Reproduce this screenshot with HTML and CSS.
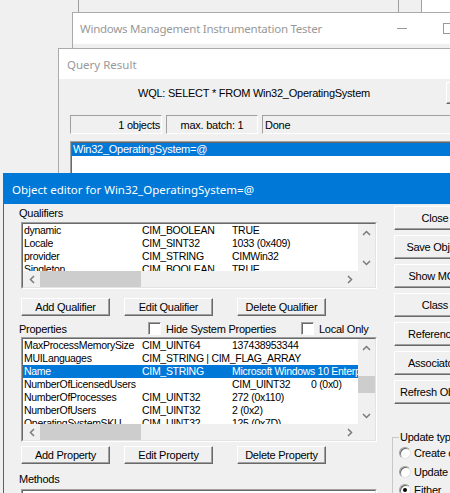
FILE: index.html
```html
<!DOCTYPE html>
<html>
<head>
  <title>Windows Management Instrumentation Tester</title>
  <link rel="stylesheet" href="styles.css">
</head>
<body>
  <div class="desktop">
    <div class="window back-window">
      <div class="back-cell wide"></div>
      <div class="back-cell narrow"></div>
      <div class="back-cell white"></div>
    </div>

    <div class="window wmi-window">
      <div class="titlebar inactive">
        <span class="title">Windows Management Instrumentation Tester</span>
        <span class="caption-btn"><span class="min-glyph"></span></span>
        <span class="caption-btn"><span class="max-glyph"></span></span>
      </div>
      <div class="window-body"></div>
    </div>

    <div class="window query-window">
      <div class="titlebar inactive">
        <span class="title">Query Result</span>
      </div>
      <div class="window-body query-body">
        <div class="wql-row">
          <span class="wql-text">WQL: SELECT * FROM Win32_OperatingSystem</span>
          <span class="btn wql-btn"></span>
        </div>
        <div class="status-row">
          <span class="status-panel objects">1 objects</span>
          <span class="status-panel batch">max. batch: 1</span>
          <span class="status-panel done">Done</span>
        </div>
        <div class="listbox result-list">
          <div class="listbox-inner">
            <div class="row selected">Win32_OperatingSystem=@</div>
          </div>
        </div>
      </div>
    </div>

    <div class="window editor-window">
      <div class="titlebar active">
        <span class="title">Object editor for Win32_OperatingSystem=@</span>
      </div>
      <div class="window-body editor-body">
        <div class="left-col">
          <div class="label qualifiers-label">Qualifiers</div>
          <div class="listbox qualifier-list">
            <div class="listbox-inner">
              <div class="list-area">
                <div class="rows">
                  <div class="row"><span>dynamic</span><span>CIM_BOOLEAN</span><span>TRUE</span></div>
                  <div class="row"><span>Locale</span><span>CIM_SINT32</span><span>1033 (0x409)</span></div>
                  <div class="row"><span>provider</span><span>CIM_STRING</span><span>CIMWin32</span></div>
                  <div class="row"><span>Singleton</span><span>CIM_BOOLEAN</span><span>TRUE</span></div>
                </div>
                <div class="vscroll">
                  <span class="arrow"><svg width="9" height="6" viewBox="0 0 9 6"><path d="M1 5L4.5 1.5L8 5" fill="none" stroke="#7a7a7a" stroke-width="1.5"/></svg></span>
                  <span class="track"></span>
                  <span class="arrow"><svg width="9" height="6" viewBox="0 0 9 6"><path d="M1 1L4.5 4.5L8 1" fill="none" stroke="#7a7a7a" stroke-width="1.5"/></svg></span>
                </div>
              </div>
              <div class="hscroll">
                <span class="arrow"><svg width="6" height="9" viewBox="0 0 6 9"><path d="M5 1L1.5 4.5L5 8" fill="none" stroke="#7a7a7a" stroke-width="1.5"/></svg></span>
                <span class="thumb"></span>
                <span class="track"></span>
                <span class="arrow"><svg width="6" height="9" viewBox="0 0 6 9"><path d="M1 1L4.5 4.5L1 8" fill="none" stroke="#7a7a7a" stroke-width="1.5"/></svg></span>
                <span class="corner"></span>
              </div>
            </div>
          </div>

          <div class="button-row">
            <span class="btn small-btn">Add Qualifier</span>
            <span class="btn small-btn">Edit Qualifier</span>
            <span class="btn small-btn far">Delete Qualifier</span>
          </div>

          <div class="options-row">
            <span class="label props-label">Properties</span>
            <span class="check-item hide-system"><span class="checkbox"></span>Hide System Properties</span>
            <span class="check-item"><span class="checkbox"></span>Local Only</span>
          </div>

          <div class="listbox property-list">
            <div class="listbox-inner">
              <div class="list-area">
                <div class="rows">
                  <div class="row"><span>MaxProcessMemorySize</span><span>CIM_UINT64</span><span>137438953344</span></div>
                  <div class="row"><span>MUILanguages</span><span class="span-rest">CIM_STRING | CIM_FLAG_ARRAY</span></div>
                  <div class="row selected"><span>Name</span><span>CIM_STRING</span><span class="span-two">Microsoft Windows 10 Enterprise</span></div>
                  <div class="row"><span class="span-two">NumberOfLicensedUsers</span><span>CIM_UINT32</span><span>0 (0x0)</span></div>
                  <div class="row"><span>NumberOfProcesses</span><span>CIM_UINT32</span><span>272 (0x110)</span></div>
                  <div class="row"><span>NumberOfUsers</span><span>CIM_UINT32</span><span>2 (0x2)</span></div>
                  <div class="row"><span>OperatingSystemSKU</span><span>CIM_UINT32</span><span>125 (0x7D)</span></div>
                </div>
                <div class="vscroll">
                  <span class="arrow"><svg width="9" height="6" viewBox="0 0 9 6"><path d="M1 5L4.5 1.5L8 5" fill="none" stroke="#7a7a7a" stroke-width="1.5"/></svg></span>
                  <span class="track"><span class="vthumb"></span></span>
                  <span class="arrow"><svg width="9" height="6" viewBox="0 0 9 6"><path d="M1 1L4.5 4.5L8 1" fill="none" stroke="#7a7a7a" stroke-width="1.5"/></svg></span>
                </div>
              </div>
              <div class="hscroll">
                <span class="arrow"><svg width="6" height="9" viewBox="0 0 6 9"><path d="M5 1L1.5 4.5L5 8" fill="none" stroke="#7a7a7a" stroke-width="1.5"/></svg></span>
                <span class="thumb"></span>
                <span class="track"></span>
                <span class="arrow"><svg width="6" height="9" viewBox="0 0 6 9"><path d="M1 1L4.5 4.5L1 8" fill="none" stroke="#7a7a7a" stroke-width="1.5"/></svg></span>
                <span class="corner"></span>
              </div>
            </div>
          </div>

          <div class="button-row second">
            <span class="btn small-btn">Add Property</span>
            <span class="btn small-btn">Edit Property</span>
            <span class="btn small-btn far">Delete Property</span>
          </div>

          <div class="label methods-label">Methods</div>
          <div class="listbox method-list">
            <div class="listbox-inner"></div>
          </div>
        </div>

        <div class="right-col">
          <span class="btn side-btn">Close</span>
          <span class="btn side-btn">Save Object</span>
          <span class="btn side-btn">Show MOF</span>
          <span class="btn side-btn">Class</span>
          <span class="btn side-btn">References</span>
          <span class="btn side-btn">Associators</span>
          <span class="btn side-btn">Refresh Object</span>

          <fieldset class="group-box">
            <legend>Update type</legend>
            <div class="radio-item"><span class="radio"></span>Create only</div>
            <div class="radio-item"><span class="radio"></span>Update only</div>
            <div class="radio-item"><span class="radio checked"></span>Either</div>
          </fieldset>
        </div>
      </div>
    </div>
  </div>
</body>
</html>
```

FILE: styles.css
```css
body {
  margin: 0;
  overflow: hidden;
  background-color: #f0f0f0;
  font-family: "Liberation Sans", Arial, sans-serif;
  font-size: 11px;
  letter-spacing: -0.25px;
  color: #000;
}

.desktop {
  position: relative;
  width: 450px;
  height: 493px;
  overflow: hidden;
}

/* Windows */
.window {
  position: absolute;
  box-sizing: border-box;
  background-color: #f0f0f0;
  border: 1px solid #aaaaaa;
}

.back-window {
  left: 78px;
  top: -20px;
  width: 400px;
  height: 33px;
  display: flex;
  border-color: #a0a0a0;
  border-top: none;
}

.back-cell {
  border-right: 1px solid #a0a0a0;
  background-color: #f0f0f0;
}

.back-cell.wide {
  width: 319px;
}

.back-cell.narrow {
  width: 22px;
}

.back-cell.white {
  flex: 1;
  background-color: #fff;
  border-right: none;
}

.wmi-window {
  left: 72px;
  top: 12px;
  width: 400px;
  height: 500px;
}

.query-window {
  left: 58px;
  top: 48px;
  width: 430px;
  height: 500px;
}

.editor-window {
  left: 3px;
  top: 173px;
  width: 484px;
  height: 340px;
  border-color: #0078d7;
}

.titlebar {
  display: flex;
  align-items: center;
  height: 30px;
  padding-left: 8px;
  background-color: #fff;
  font-family: "Noto Sans", "Open Sans", sans-serif;
  font-size: 11.5px;
  letter-spacing: 0;
  white-space: nowrap;
}

.wmi-window .titlebar {
  height: 31px;
  padding-left: 7px;
  letter-spacing: -0.25px;
}

.titlebar.inactive {
  color: #999;
}

.titlebar.active {
  background-color: #0078d7;
  color: #fff;
}

.titlebar .title {
  flex: 1;
}

.caption-btn {
  display: flex;
  align-items: center;
  justify-content: center;
  width: 46px;
  height: 100%;
}

.min-glyph {
  width: 10px;
  border-top: 1px solid #999;
}

.max-glyph {
  width: 9px;
  height: 9px;
  border: 1px solid #999;
}

/* Query result */
.query-body {
  padding: 0 0 0 11px;
}

.wql-row {
  display: flex;
  align-items: center;
  height: 28px;
}

.wql-text {
  flex: none;
  width: 368px;
  text-align: center;
}

.wql-btn {
  flex: none;
  width: 40px;
  height: 22px;
  margin-left: 8px;
}

.status-row {
  display: flex;
  margin-top: 8px;
  height: 19px;
}

.status-panel {
  box-sizing: border-box;
  display: flex;
  align-items: center;
  height: 19px;
  border: 1px solid;
  border-color: #a0a0a0 #fff #fff #a0a0a0;
}

.status-panel.objects {
  width: 92px;
  justify-content: flex-end;
  padding-right: 1px;
}

.status-panel.batch {
  width: 92px;
  margin-left: 4px;
  justify-content: center;
}

.status-panel.done {
  flex: 1;
  margin-left: 4px;
  padding-left: 2px;
}

.result-list {
  margin-top: 7px;
  height: 120px;
}

/* Sunken list boxes */
.listbox {
  box-sizing: border-box;
  border: 1px solid;
  border-color: #a0a0a0 #fff #fff #a0a0a0;
  background-color: #fff;
}

.listbox-inner {
  box-sizing: border-box;
  height: 100%;
  border: 1px solid;
  border-color: #696969 #e3e3e3 #e3e3e3 #696969;
  overflow: hidden;
}

.row {
  height: 13px;
  line-height: 13px;
  padding-left: 1px;
  white-space: nowrap;
}

.row.selected {
  background-color: #0078d7;
  color: #fff;
}

.list-area {
  display: flex;
}

.rows {
  flex: 1;
  overflow: hidden;
}

.rows .row {
  display: grid;
  grid-template-columns: 118px 90px 79px 200px;
  font-size: 10.5px;
  letter-spacing: -0.3px;
  overflow: hidden;
}

.rows .row .span-two {
  grid-column: span 2;
}

.rows .row .span-rest {
  grid-column: span 3;
}

.vscroll {
  display: flex;
  flex-direction: column;
  width: 17px;
  background-color: #f0f0f0;
}

.vscroll .arrow,
.hscroll .arrow {
  display: flex;
  align-items: center;
  justify-content: center;
  flex: none;
  width: 17px;
  height: 17px;
}

.vscroll .track {
  flex: 1;
  position: relative;
}

.vthumb {
  position: absolute;
  left: 0;
  top: 20px;
  width: 17px;
  height: 17px;
  background-color: #cdcdcd;
}

.hscroll {
  display: flex;
  height: 16px;
  background-color: #f0f0f0;
}

.hscroll .arrow {
  height: 16px;
}

.hscroll .thumb {
  width: 101px;
  background-color: #cdcdcd;
}

.hscroll .track {
  flex: 1;
}

.hscroll .corner {
  width: 17px;
  background-color: #f0f0f0;
}

.qualifier-list {
  height: 67px;
}

.qualifier-list .list-area {
  height: 47px;
}

.property-list {
  height: 105px;
}

.property-list .list-area {
  height: 85px;
}

.method-list {
  height: 40px;
}

/* Object editor */
.editor-body {
  display: flex;
  padding-left: 17px;
}

.left-col {
  width: 356px;
}

.label {
  margin-left: -2px;
}

.qualifiers-label {
  height: 18px;
  line-height: 18px;
}

.button-row {
  display: flex;
  margin-top: 9px;
}

.button-row.second {
  margin-top: 4px;
}

.btn {
  box-sizing: border-box;
  display: flex;
  align-items: center;
  justify-content: center;
  border: 1px solid;
  border-color: #fff #696969 #696969 #fff;
  box-shadow: inset -1px -1px #a0a0a0;
  background-color: #f0f0f0;
  white-space: nowrap;
}

.small-btn {
  width: 89px;
  height: 18px;
  margin-right: 14px;
}

.small-btn.far {
  margin-left: 10px;
}

.options-row {
  display: flex;
  align-items: center;
  height: 17px;
  padding-top: 4px;
}

.props-label {
  width: 129px;
}

.check-item {
  display: flex;
  align-items: center;
  gap: 5px;
}

.hide-system {
  width: 153px;
}

.checkbox {
  box-sizing: border-box;
  width: 13px;
  height: 13px;
  background-color: #fff;
  border: 1px solid;
  border-color: #a0a0a0 #fff #fff #a0a0a0;
  box-shadow: inset 1px 1px #696969;
}

.methods-label {
  height: 19px;
  line-height: 19px;
  padding-top: 6px;
}

.right-col {
  display: flex;
  flex-direction: column;
  width: 82px;
  margin-left: 17px;
  padding-top: 2px;
}

.side-btn {
  width: 82px;
  height: 24px;
  margin-bottom: 5px;
  flex: none;
}

.group-box {
  margin: 22px 0 0 -2px;
  padding: 0 0 0 6px;
  width: 90px;
  border: 1px solid #c8c8c8;
  border-right: none;
}

.group-box legend {
  padding: 0 1px;
  line-height: 13px;
  white-space: nowrap;
}

.radio-item {
  display: flex;
  align-items: center;
  gap: 3px;
  height: 18.5px;
  white-space: nowrap;
}

.radio {
  box-sizing: border-box;
  position: relative;
  width: 12px;
  height: 12px;
  border-radius: 50%;
  background-color: #fff;
  border: 1px solid;
  border-color: #a0a0a0 #e3e3e3 #e3e3e3 #a0a0a0;
  box-shadow: inset 1px 1px #696969;
}

.radio.checked:after {
  content: "";
  position: absolute;
  left: 3px;
  top: 3px;
  width: 4px;
  height: 4px;
  border-radius: 50%;
  background-color: #000;
}
```
